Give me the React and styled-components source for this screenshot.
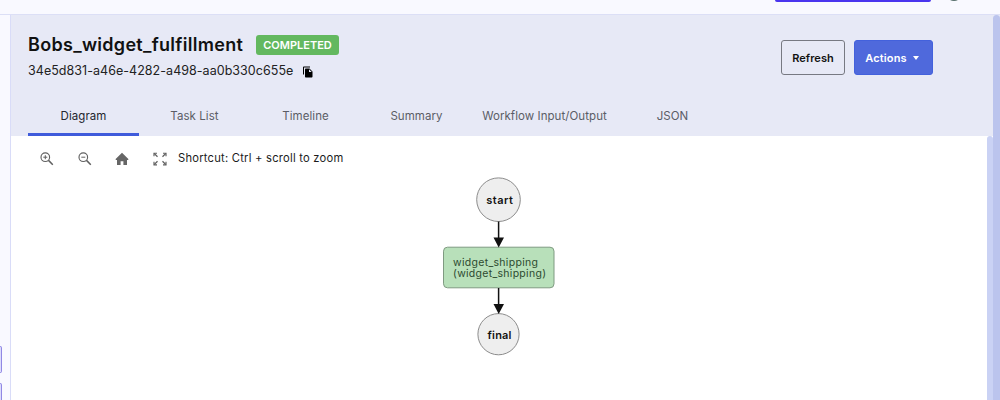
import React from "react";
import styled, { createGlobalStyle } from "styled-components";
import { MdFileCopy } from "react-icons/md";

const GlobalStyle = createGlobalStyle`
  * { box-sizing: border-box; }
  body { margin: 0; overflow: hidden; font-family: Inter, "Liberation Sans", sans-serif; color: #111; }
`;

const Page = styled.div`
  width: 1000px;
  height: 400px;
  display: flex;
  flex-direction: column;
  background: #f9f9ff;
  overflow: hidden;
`;

const TopBar = styled.div`
  height: 15px;
  flex: none;
  display: flex;
  justify-content: flex-end;
  align-items: flex-start;
  padding-right: 38px;
  border-bottom: 1px solid #dcdff6;
  overflow: hidden;
`;

const TopButtonEdge = styled.div`
  width: 156px;
  height: 2px;
  flex: none;
  margin-right: 15px;
  background: #4a35ee;
  border-radius: 0 0 2px 2px;
`;

const AvatarEdge = styled.div`
  width: 16px;
  height: 16px;
  flex: none;
  margin-top: -15px;
  border-radius: 50%;
  background: #566e6b;
`;

const Body = styled.div`
  flex: 1;
  min-height: 0;
  display: flex;
`;

const SideStrip = styled.div`
  width: 11px;
  flex: none;
  border-right: 1px solid #d9dcf8;
  padding-top: 331px;
  overflow: hidden;
`;

const SideItem = styled.div`
  width: 2px;
  height: 27px;
  margin-bottom: 10px;
  border: 1px solid #9188e4;
  border-left: 0;
  border-radius: 0 2px 2px 0;
  background: #dcdcfb;
`;

const Main = styled.main`
  flex: 1;
  min-width: 0;
  display: flex;
  flex-direction: column;
  background: #fff;
`;

const Header = styled.header`
  height: 121px;
  flex: none;
  background: #e7e9f6;
  display: flex;
  flex-direction: column;
  justify-content: space-between;
  padding: 17px 60px 0 17px;
`;

const HeaderTop = styled.div`
  display: flex;
  justify-content: space-between;
`;

const TitleRow = styled.div`
  display: flex;
  align-items: center;
  height: 25px;
  gap: 13px;
`;

const Title = styled.h1`
  margin: 0;
  width: 215px;
  font-size: 18px;
  font-weight: 600;
  line-height: 24px;
  letter-spacing: 0.3px;
  white-space: nowrap;
`;

const Status = styled.span`
  width: 83px;
  height: 20px;
  margin-top: 1px;
  border-radius: 3px;
  background: #63b85f;
  color: #fff;
  font-size: 11px;
  font-weight: 600;
  line-height: 20px;
  letter-spacing: 0;
  text-align: center;
`;

const IdRow = styled.div`
  display: flex;
  align-items: center;
  height: 27px;
  gap: 9px;
  font-size: 12.5px;
  color: #222;
  letter-spacing: 0.04px;
  white-space: nowrap;

  span { width: 265px; }
  svg { margin-top: 3px; color: #000; }
`;

const ButtonRow = styled.div`
  display: flex;
  gap: 9px;
  padding-top: 8px;
`;

const Button = styled.button`
  width: ${(p) => (p.$primary ? 79 : 64)}px;
  height: 35px;
  padding: 0 ${(p) => (p.$primary ? 3 : 0)}px 0 0;
  display: flex;
  align-items: center;
  justify-content: center;
  gap: 6px;
  border: 1px solid ${(p) => (p.$primary ? "#4361dc" : "#777982")};
  border-radius: 3px;
  background: ${(p) => (p.$primary ? "#4f69dc" : "transparent")};
  color: ${(p) => (p.$primary ? "#fff" : "#111")};
  font: 600 11px Inter, "Liberation Sans", sans-serif;
  letter-spacing: ${(p) => (p.$primary ? 0.15 : 0.05)}px;
`;

const Caret = styled.span`
  border: 3.5px solid transparent;
  border-top: 4px solid #fff;
  border-bottom: 0;
`;

const Tabs = styled.nav`
  display: flex;
  height: 40px;
`;

const Tab = styled.div`
  width: ${(p) => p.$width || 111}px;
  text-align: center;
  font-size: 11.5px;
  line-height: 40px;
  height: 40px;
  letter-spacing: 0.06px;
  color: ${(p) => (p.$active ? "#24262e" : "#5b5d66")};
  border-bottom: 3px solid ${(p) => (p.$active ? "#3f5bdb" : "transparent")};
`;

const Content = styled.section`
  flex: 1;
  min-height: 0;
  display: flex;
`;

const Canvas = styled.div`
  flex: 1;
  display: flex;
  flex-direction: column;
  align-items: flex-start;
`;

const ZoomBar = styled.div`
  height: 42px;
  display: flex;
  align-items: center;
  padding: 3px 0 0 28px;
  gap: 21.5px;
  color: #666;
`;

const ToolIcon = styled.svg`
  width: 16px;
  height: 16px;
  flex: none;
  fill: none;
  stroke: #606060;
  stroke-width: 1.15;
`;

const Hint = styled.span`
  margin: -2px 0 0 -11px;
  color: #1b1b1b;
  font-size: 11.2px;
  letter-spacing: 0.23px;
  white-space: nowrap;
`;

const InnerScroll = styled.div`
  width: 6.5px;
  border-radius: 3px 3px 0 0;
  background: #cad2f4;
`;

const OuterScroll = styled.div`
  width: 7px;
  border-radius: 4px 4px 0 0;
  background: #bbc4ed;
`;

const ScrollGutter = styled.div`
  display: flex;
  background: #e7e9f6;
`;

const Diagram = styled.svg`
  display: block;
  margin: -1px 0 0 419px;
  font-family: Inter, "Liberation Sans", sans-serif;
`;

const TABS = [
  { label: "Diagram", active: true },
  { label: "Task List" },
  { label: "Timeline" },
  { label: "Summary" },
  { label: "Workflow Input/Output", width: 145 },
  { label: "JSON" },
];

function Magnifier({ plus }) {
  return (
    <ToolIcon viewBox="0 0 16 16">
      <circle cx="6.3" cy="6.2" r="4.3" />
      <path d="M4.3 6.2h4" strokeWidth="1" />
      {plus && <path d="M6.3 4.2v4" strokeWidth="1" />}
      <path d="M9.5 9.4l4.3 4.3" strokeWidth="1.5" />
    </ToolIcon>
  );
}

function HomeIcon() {
  return (
    <ToolIcon viewBox="0 0 16 16">
      <path
        d="M8 1.7L1.4 8.2l.7.8H3v5h3.6v-3.8h2.8V14H13V9h.9l.7-.8z"
        fill="#666"
        stroke="none"
      />
    </ToolIcon>
  );
}

function ExpandIcon() {
  return (
    <ToolIcon viewBox="0 0 16 16">
      <path d="M2 5.2V2.2h3M11 2.2h3v3M14 10.8v3h-3M5 13.8H2v-3" />
      <path d="M2.2 2.4l3.3 3.3M13.8 2.4l-3.3 3.3M13.8 13.6l-3.3-3.3M2.2 13.6l3.3-3.3" strokeWidth="1.3" />
    </ToolIcon>
  );
}

function WorkflowDiagram() {
  return (
    <Diagram width="140" height="200" viewBox="430 177 140 200">
      <g fill="#eee" stroke="#8c8c8c" strokeWidth="1">
        <circle cx="498.5" cy="199.7" r="21.8" />
        <circle cx="498.5" cy="334.2" r="20.6" />
      </g>
      <rect x="443.5" y="247.2" width="110.5" height="40.6" rx="4" fill="#b8e0ba" stroke="#7f9a81" />
      <g stroke="#111" strokeWidth="1.5">
        <path d="M498.6 221.5V240" />
        <path d="M498.6 288V306" />
      </g>
      <path d="M493.5 237.5h10.5l-5.3 10z M493.5 304h10.5l-5.3 10z" fill="#111" />
      <g fontSize="11" fontWeight="600" fill="#111">
        <text x="486.3" y="204.2" textLength="26.5">start</text>
        <text x="487.5" y="339" textLength="24">final</text>
      </g>
      <g fontSize="10.5" fill="#2d4a30">
        <text x="453" y="266.3" textLength="85">widget_shipping</text>
        <text x="453" y="277.3" textLength="93">(widget_shipping)</text>
      </g>
    </Diagram>
  );
}

export default function App() {
  return (
    <Page>
      <GlobalStyle />
      <TopBar>
        <TopButtonEdge />
        <AvatarEdge />
      </TopBar>
      <Body>
        <SideStrip>
          <SideItem />
          <SideItem />
        </SideStrip>
        <Main>
          <Header>
            <HeaderTop>
              <div>
                <TitleRow>
                  <Title>Bobs_widget_fulfillment</Title>
                  <Status>COMPLETED</Status>
                </TitleRow>
                <IdRow>
                  <span>34e5d831-a46e-4282-a498-aa0b330c655e</span>
                  <MdFileCopy size={12} />
                </IdRow>
              </div>
              <ButtonRow>
                <Button>Refresh</Button>
                <Button $primary>
                  Actions <Caret />
                </Button>
              </ButtonRow>
            </HeaderTop>
            <Tabs>
              {TABS.map((t) => (
                <Tab key={t.label} $active={t.active} $width={t.width}>
                  {t.label}
                </Tab>
              ))}
            </Tabs>
          </Header>
          <Content>
            <Canvas>
              <ZoomBar>
                <Magnifier plus />
                <Magnifier />
                <HomeIcon />
                <ExpandIcon />
                <Hint>Shortcut: Ctrl + scroll to zoom</Hint>
              </ZoomBar>
              <WorkflowDiagram />
            </Canvas>
            <InnerScroll />
          </Content>
        </Main>
        <ScrollGutter>
          <OuterScroll />
        </ScrollGutter>
      </Body>
    </Page>
  );
}
